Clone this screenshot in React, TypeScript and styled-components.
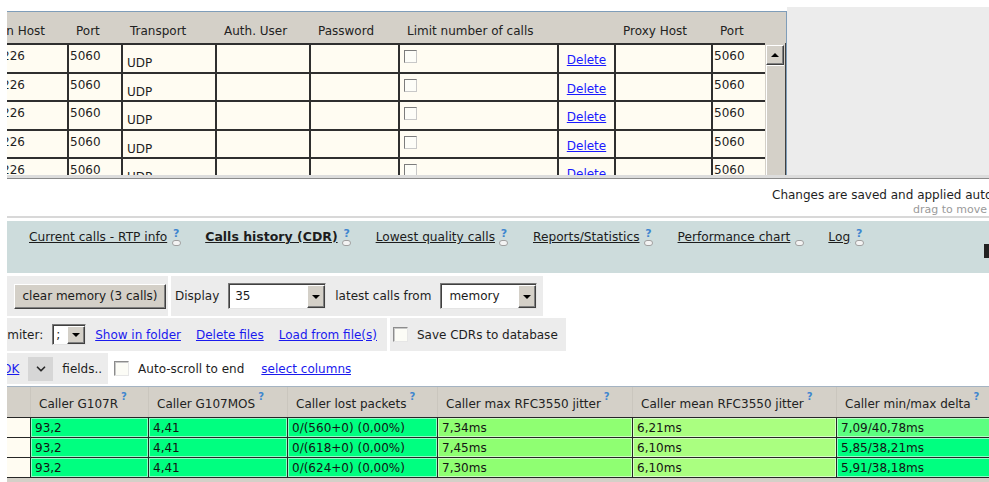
import React from "react";
import styled, { createGlobalStyle, css } from "styled-components";
import { ChevronDown } from "lucide-react";

const GlobalStyle = createGlobalStyle`
  html, body { margin: 0; padding: 0; background: #ffffff; }
  body {
    font-family: "DejaVu Sans", Verdana, sans-serif;
    font-size: 12px;
    color: #1b1b1b;
  }
  #root { width: 989px; height: 482px; overflow: hidden; }
`;

/* column widths of the registration grid */
const REG_COLS = [60, 54, 94, 94, 89, 159, 57, 97, 54];
const REG_GRID = REG_COLS.map((c) => `${c}px`).join(" ");

/* column widths of the CDR grid */
const CDR_COLS = [23, 118, 139, 150, 195, 204, 170];
const CDR_GRID = CDR_COLS.map((c) => `${c}px`).join(" ");

const Page = styled.div`
  width: 989px;
  height: 482px;
  overflow: hidden;
  padding-left: 7px;
  box-sizing: border-box;
  display: flex;
  flex-direction: column;
`;

/* ---------- registration panel ---------- */

const TopArea = styled.div`
  display: flex;
  height: 168px;
  margin-top: 7px;
  flex-shrink: 0;
`;

const RegPanel = styled.div`
  width: 779px;
  margin-top: 4px;
  border-top: 1px solid #7f9db9;
  border-right: 1px solid #7f9db9;
  background: #d4d0c8;
  display: flex;
  flex-direction: column;
  overflow: hidden;
  flex-shrink: 0;
`;

const SideFill = styled.div`
  flex: 1;
  background: #ececec;
`;

const RegHeader = styled.div`
  display: grid;
  grid-template-columns: ${REG_GRID} 1fr;
  height: 31px;
  flex-shrink: 0;
`;

const RegHeadCell = styled.div<{ $tail?: boolean }>`
  display: flex;
  align-items: center;
  padding: 6px 0 0 9px;
  white-space: nowrap;
  overflow: hidden;
  color: #222;
  ${(p) =>
    p.$tail &&
    css`
      justify-content: flex-end;
      padding-left: 0;
      padding-right: 22px;
    `}
`;

const RegBody = styled.div`
  display: flex;
  flex: 1;
  min-height: 0;
`;

const RegRows = styled.div`
  width: 758px;
  overflow: hidden;
  background: #fffcf2;
`;

const RegRow = styled.div`
  display: grid;
  grid-template-columns: ${REG_GRID};
  height: 28.5px;
`;

const RegCell = styled.div<{
  $first?: boolean;
  $top?: number;
  $left?: number;
  $center?: boolean;
  $tail?: boolean;
}>`
  display: flex;
  align-items: flex-start;
  border-top: 2px solid #2f2f2f;
  border-left: ${(p) => (p.$first ? "none" : "2px solid #2f2f2f")};
  background: #fffcf2;
  padding-top: ${(p) => p.$top ?? 4}px;
  padding-left: ${(p) => p.$left ?? 1}px;
  white-space: nowrap;
  overflow: hidden;
  line-height: 14px;
  color: #1e1e1e;
  ${(p) =>
    p.$center &&
    css`
      justify-content: center;
      padding-left: 0;
    `}
  ${(p) =>
    p.$tail &&
    css`
      justify-content: flex-end;
      padding-left: 0;
      padding-right: 42px;
    `}
`;

const CellBox = styled.span`
  width: 13px;
  height: 13px;
  box-sizing: border-box;
  border: 1px solid;
  border-color: #7c7c7c #c8c8c8 #c8c8c8 #7c7c7c;
  background: #fdfdf8;
`;

const DeleteLink = styled.a`
  color: #1a1aff;
  text-decoration: underline;
  cursor: pointer;
`;

const ScrollTrack = styled.div`
  width: 20px;
  border-right: 1px solid #404040;
  background: #d4d0c8;
  display: flex;
  flex-direction: column;
  padding-top: 2px;
`;

const ScrollButton = styled.div`
  margin-left: 1px;
  width: 18px;
  height: 20px;
  box-sizing: border-box;
  border: 1px solid;
  border-color: #ffffff #404040 #404040 #ffffff;
  box-shadow: inset -1px -1px #808080;
  display: flex;
  align-items: center;
  justify-content: center;
`;

const ArrowUp = styled.span`
  width: 0;
  height: 0;
  border-left: 4px solid transparent;
  border-right: 4px solid transparent;
  border-bottom: 4px solid #000;
`;

const ScrollThumb = styled.div`
  flex: 1;
  margin-left: 1px;
  width: 18px;
  box-sizing: border-box;
  border-left: 1px solid #ffffff;
  border-top: 1px solid #ffffff;
`;

/* ---------- splitter and status ---------- */

const Splitter = styled.div`
  height: 3px;
  background: #dcdcdc;
  border-bottom: 1px solid #8a8a8a;
  flex-shrink: 0;
`;

const StatusBar = styled.div`
  height: 37px;
  flex-shrink: 0;
  border-bottom: 2px solid #d8d8d8;
  margin-bottom: 3px;
  overflow: hidden;
  white-space: nowrap;
  display: flex;
  flex-direction: column;
`;

const StatusLine = styled.div`
  padding: 9px 0 0 765px;
  line-height: 14px;
  color: #1e1e1e;
`;

const StatusHint = styled.div`
  text-align: right;
  padding: 2px 2px 0 0;
  font-size: 11px;
  line-height: 12px;
  color: #9a9a9a;
`;

/* ---------- tabs ---------- */

const TabBar = styled.div`
  height: 52px;
  flex-shrink: 0;
  background: #cddcdc;
  display: flex;
  align-items: flex-start;
  padding: 9px 0 0 22px;
  box-sizing: border-box;
  gap: 24px;
`;

const TabItem = styled.div`
  display: flex;
  align-items: flex-start;
  white-space: nowrap;
`;

const TabLink = styled.a<{ $active?: boolean }>`
  font-size: ${(p) => (p.$active ? "12.5px" : "12.2px")};
  line-height: 14px;
  color: #1c1c1c;
  text-decoration: underline;
  font-weight: ${(p) => (p.$active ? "bold" : "normal")};
`;

const Help = styled.span`
  display: inline-flex;
  flex-direction: column;
  align-items: center;
  width: 10px;
  margin: -2px 0 0 4px;
`;

const HelpMark = styled.span<{ $hidden?: boolean }>`
  font: bold 11px "DejaVu Sans", sans-serif;
  line-height: 11px;
  height: 11px;
  color: #3f86cf;
  visibility: ${(p) => (p.$hidden ? "hidden" : "visible")};
`;

const HelpBase = styled.span`
  width: 9px;
  height: 6px;
  margin-top: 1px;
  box-sizing: border-box;
  border: 1px solid #a0a0a0;
  border-radius: 3px;
  background: #f3f3f3;
`;

const EdgeBlock = styled.div`
  margin: 14px 0 0 auto;
  width: 5px;
  height: 14px;
  background: #222;
`;

/* ---------- controls ---------- */

const Controls = styled.div`
  display: flex;
  flex-direction: column;
  gap: 2px;
  margin-top: 3px;
  overflow: hidden;
  flex-shrink: 0;
`;

const ControlRow = styled.div<{ $h: number }>`
  display: flex;
  align-items: stretch;
  gap: 3px;
  height: ${(p) => p.$h}px;
  white-space: nowrap;
`;

const Group = styled.div<{ $pl?: number; $pr?: number; $plain?: boolean }>`
  display: flex;
  align-items: center;
  background: ${(p) => (p.$plain ? "transparent" : "#ececec")};
  padding: 0 ${(p) => p.$pr ?? 6}px 0 ${(p) => p.$pl ?? 4}px;
  gap: 9px;
  overflow: hidden;
`;

const Button = styled.button`
  width: 152px;
  height: 25px;
  padding: 0;
  background: #d4d0c8;
  border: 1px solid;
  border-color: #ffffff #404040 #404040 #ffffff;
  box-shadow: inset -1px -1px #808080;
  font-family: "DejaVu Sans", Verdana, sans-serif;
  font-size: 12px;
  color: #1b1b1b;
`;

const Label = styled.span`
  color: #1e1e1e;
`;

const Clipped = styled.span<{ $cut: number }>`
  margin-left: -${(p) => p.$cut}px;
`;

const Select = styled.div<{ $w: number; $h: number }>`
  width: ${(p) => p.$w}px;
  height: ${(p) => p.$h}px;
  box-sizing: border-box;
  display: flex;
  align-items: stretch;
  background: #ffffff;
  border: 1px solid;
  border-color: #7a7a7a #e4e4e4 #e4e4e4 #7a7a7a;
  box-shadow: inset 1px 1px #404040;
`;

const SelectText = styled.span<{ $pl: number }>`
  flex: 1;
  display: flex;
  align-items: center;
  padding-left: ${(p) => p.$pl}px;
`;

const SelectArrow = styled.span`
  width: 18px;
  margin: 1px 0 0 0;
  box-sizing: border-box;
  background: #d4d0c8;
  border: 1px solid;
  border-color: #ffffff #404040 #404040 #ffffff;
  box-shadow: inset -1px -1px #808080;
  display: flex;
  align-items: center;
  justify-content: center;
`;

const ArrowDown = styled.span`
  width: 0;
  height: 0;
  border-left: 4px solid transparent;
  border-right: 4px solid transparent;
  border-top: 4px solid #000;
`;

const Link = styled.a<{ $lead?: number }>`
  color: #1a1aee;
  text-decoration: underline;
  cursor: pointer;
  margin-left: ${(p) => p.$lead ?? 0}px;
`;

const LinkRow = styled.span`
  display: flex;
  gap: 15px;
`;

const Check = styled.span`
  width: 15px;
  height: 15px;
  box-sizing: border-box;
  border: 1px solid;
  border-color: #8c8c8c #e6e6e6 #e6e6e6 #8c8c8c;
  box-shadow: inset 1px 1px #c8c8c8;
  background: #fcfcf6;
`;

const IconButton = styled.span`
  width: 25px;
  height: 24px;
  background: #d6d6d6;
  display: flex;
  align-items: center;
  justify-content: center;
  color: #2a2a2a;
`;

/* ---------- CDR grid ---------- */

const CdrTable = styled.div`
  margin-top: 2px;
  border-top: 1px solid #a4b3c2;
  background: #d4d0c8;
  width: 1000px;
  flex: 1;
`;

const CdrHeader = styled.div`
  display: grid;
  grid-template-columns: ${CDR_GRID};
  height: 30px;
`;

const CdrHeadCell = styled.div<{ $first?: boolean }>`
  display: flex;
  align-items: center;
  padding: 3px 0 0 8px;
  white-space: nowrap;
  color: #222;
  border-left: ${(p) => (p.$first ? "none" : "1px solid #cac6be")};
`;

const Sup = styled.span`
  font: bold 10px "DejaVu Sans", sans-serif;
  color: #3f86cf;
  margin: -14px 0 0 3px;
`;

const CdrRow = styled.div`
  display: grid;
  grid-template-columns: ${CDR_GRID};
  height: 20px;
`;

const CdrCell = styled.div<{ $bg: string; $first?: boolean }>`
  display: flex;
  align-items: center;
  padding-left: 4px;
  background: ${(p) => p.$bg};
  border-top: 1px solid #262626;
  border-left: ${(p) => (p.$first ? "none" : "1px solid #262626")};
  box-shadow: inset 0 0 0 1px ${(p) => (p.$first ? "transparent" : "rgba(255,255,255,0.55)")};
  white-space: nowrap;
  color: #141414;
  line-height: 14px;
`;

const CdrFoot = styled.div`
  border-top: 1px solid #262626;
  height: 6px;
`;

const GREEN = "#00ff80";
const MAX_J = "#8fff72";
const MEAN_J = "#aaff80";

const cdrHeads = [
  "Caller G107R",
  "Caller G107MOS",
  "Caller lost packets",
  "Caller max RFC3550 jitter",
  "Caller mean RFC3550 jitter",
  "Caller min/max delta",
];

const cdrRows = [
  ["93,2", "4,41", "0/(560+0) (0,00%)", "7,34ms", "6,21ms", "7,09/40,78ms", "#5cff80"],
  ["93,2", "4,41", "0/(618+0) (0,00%)", "7,45ms", "6,10ms", "5,85/38,21ms", GREEN],
  ["93,2", "4,41", "0/(624+0) (0,00%)", "7,30ms", "6,10ms", "5,91/38,18ms", GREEN],
];

const regHeads = [
  "Port",
  "Transport",
  "Auth. User",
  "Password",
  "Limit number of calls",
  "",
  "Proxy Host",
  "Port",
];

const tabs = [
  { label: "Current calls - RTP info", help: true },
  { label: "Calls history (CDR)", help: true, active: true },
  { label: "Lowest quality calls", help: true },
  { label: "Reports/Statistics", help: true },
  { label: "Performance chart", help: false },
  { label: "Log", help: true },
];

function HelpIcon({ bare }: { bare?: boolean }) {
  return (
    <Help>
      <HelpMark $hidden={bare}>?</HelpMark>
      <HelpBase />
    </Help>
  );
}

export default function App() {
  return (
    <>
      <GlobalStyle />
      <Page>
        <TopArea>
          <RegPanel>
            <RegHeader>
              <RegHeadCell $tail>Registration Host</RegHeadCell>
              {regHeads.map((h, i) => (
                <RegHeadCell key={i}>{h}</RegHeadCell>
              ))}
              <RegHeadCell />
            </RegHeader>
            <RegBody>
              <RegRows>
                {[0, 1, 2, 3, 4].map((r) => (
                  <RegRow key={r}>
                    <RegCell $first $tail $top={4}>
                      192.168.1.226
                    </RegCell>
                    <RegCell $top={4}>5060</RegCell>
                    <RegCell $top={11} $left={4}>
                      UDP
                    </RegCell>
                    <RegCell />
                    <RegCell />
                    <RegCell $top={5} $left={4}>
                      <CellBox />
                    </RegCell>
                    <RegCell $center $top={8}>
                      <DeleteLink>Delete</DeleteLink>
                    </RegCell>
                    <RegCell />
                    <RegCell $top={4}>5060</RegCell>
                  </RegRow>
                ))}
              </RegRows>
              <ScrollTrack>
                <ScrollButton>
                  <ArrowUp />
                </ScrollButton>
                <ScrollThumb />
              </ScrollTrack>
            </RegBody>
          </RegPanel>
          <SideFill />
        </TopArea>

        <Splitter />

        <StatusBar>
          <StatusLine>Changes are saved and applied automatically</StatusLine>
          <StatusHint>drag to move</StatusHint>
        </StatusBar>

        <TabBar>
          {tabs.map((t) => (
            <TabItem key={t.label}>
              <TabLink $active={t.active}>{t.label}</TabLink>
              <HelpIcon bare={!t.help} />
            </TabItem>
          ))}
          <EdgeBlock />
        </TabBar>

        <Controls>
          <ControlRow $h={40}>
            <Group $pl={7} $pr={2}>
              <Button>clear memory (3 calls)</Button>
            </Group>
            <Group $pl={4} $pr={6}>
              <Label>Display</Label>
              <Select $w={98} $h={26}>
                <SelectText $pl={6}>35</SelectText>
                <SelectArrow>
                  <ArrowDown />
                </SelectArrow>
              </Select>
              <Label>latest calls from</Label>
              <Select $w={97} $h={26}>
                <SelectText $pl={8}>memory</SelectText>
                <SelectArrow>
                  <ArrowDown />
                </SelectArrow>
              </Select>
            </Group>
          </ControlRow>

          <ControlRow $h={33}>
            <Group $pl={0} $pr={10}>
              <Label>
                <Clipped $cut={23}>Delimiter:</Clipped>
              </Label>
              <Select $w={34} $h={21}>
                <SelectText $pl={3}>;</SelectText>
                <SelectArrow>
                  <ArrowDown />
                </SelectArrow>
              </Select>
              <LinkRow>
                <Link>Show in folder</Link>
                <Link>Delete files</Link>
                <Link>Load from file(s)</Link>
              </LinkRow>
            </Group>
            <Group $pl={3} $pr={8}>
              <Check />
              <Label>Save CDRs to database</Label>
            </Group>
          </ControlRow>

          <ControlRow $h={31}>
            <Group $pl={0} $pr={6}>
              <Link>
                <Clipped $cut={5}>OK</Clipped>
              </Link>
              <IconButton>
                <ChevronDown size={14} strokeWidth={3} />
              </IconButton>
              <Label>fields..</Label>
            </Group>
            <Group $plain $pl={3} $pr={0}>
              <Check />
              <Label>Auto-scroll to end</Label>
              <Link $lead={8}>select columns</Link>
            </Group>
          </ControlRow>
        </Controls>

        <CdrTable>
          <CdrHeader>
            <CdrHeadCell $first />
            {cdrHeads.map((h) => (
              <CdrHeadCell key={h}>
                {h}
                <Sup>?</Sup>
              </CdrHeadCell>
            ))}
          </CdrHeader>
          {cdrRows.map((r, i) => (
            <CdrRow key={i}>
              <CdrCell $first $bg="#fffcf2" />
              <CdrCell $bg={GREEN}>{r[0]}</CdrCell>
              <CdrCell $bg={GREEN}>{r[1]}</CdrCell>
              <CdrCell $bg={GREEN}>{r[2]}</CdrCell>
              <CdrCell $bg={MAX_J}>{r[3]}</CdrCell>
              <CdrCell $bg={MEAN_J}>{r[4]}</CdrCell>
              <CdrCell $bg={r[6]}>{r[5]}</CdrCell>
            </CdrRow>
          ))}
          <CdrFoot />
        </CdrTable>
      </Page>
    </>
  );
}
